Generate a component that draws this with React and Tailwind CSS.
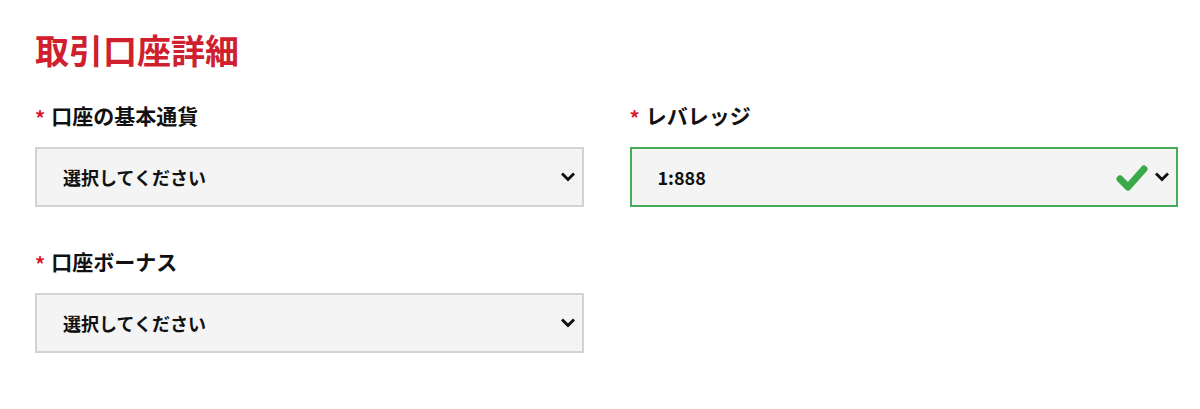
import { useState } from "react";

const font = { fontFamily: '"Noto Sans CJK JP", "Noto Sans", sans-serif' };

function Chevron() {
    return (
        <svg width="14" height="10" viewBox="0 0 14 10" className="shrink-0">
            <path d="M2 2.5 L7 7.5 L12 2.5" fill="none" stroke="#111" strokeWidth="3" strokeLinecap="square" />
        </svg>
    );
}

function Check() {
    return (
        <svg width="32" height="28" viewBox="0 0 32 28" className="shrink-0">
            <path d="M4 15 L12 23 L28 5" fill="none" stroke="#3aa94a" strokeWidth="7" strokeLinecap="round" strokeLinejoin="round" />
        </svg>
    );
}

function Field({ label, value, valid }) {
    return (
        <div className="flex flex-col">
            <label className="h-[40px] flex items-center gap-[6px] text-[21px] font-bold text-[#111]">
                <span className="text-[#d7192b] text-[20px] leading-none pt-[4px]">*</span>
                {label}
            </label>
            <div className={`mt-[11px] h-[60px] flex items-center pl-[26px] pr-[5px] bg-[#f4f4f4] border-2
                            ${valid ? "border-[#45ad55]" : "border-[#d3d3d3]"}`}>
                <span className="flex-1 text-[18px] font-bold text-[#111]">{value}</span>
                {valid && <span className="mr-[7px] mt-[1px]"><Check /></span>}
                <span className="mr-[2px]"><Chevron /></span>
            </div>
        </div>
    );
}

export default function App() {
    const [fields] = useState([
        { label: "口座の基本通貨", value: "選択してください" },
        { label: "レバレッジ", value: "1:888", valid: true },
        { label: "口座ボーナス", value: "選択してください" },
    ]);

    return (
        <div className="w-[1200px] h-[409px] bg-white pl-[35px] pr-[22px] pt-[27px]" style={font}>
            <h2 className="text-[34px] font-bold leading-[46px] text-[#d0202e]">取引口座詳細</h2>
            <div className="mt-[23px] grid grid-cols-2 gap-x-[46px] gap-y-[35px]">
                {fields.map((f, i) => (
                    <Field key={i} {...f} />
                ))}
            </div>
        </div>
    );
}
